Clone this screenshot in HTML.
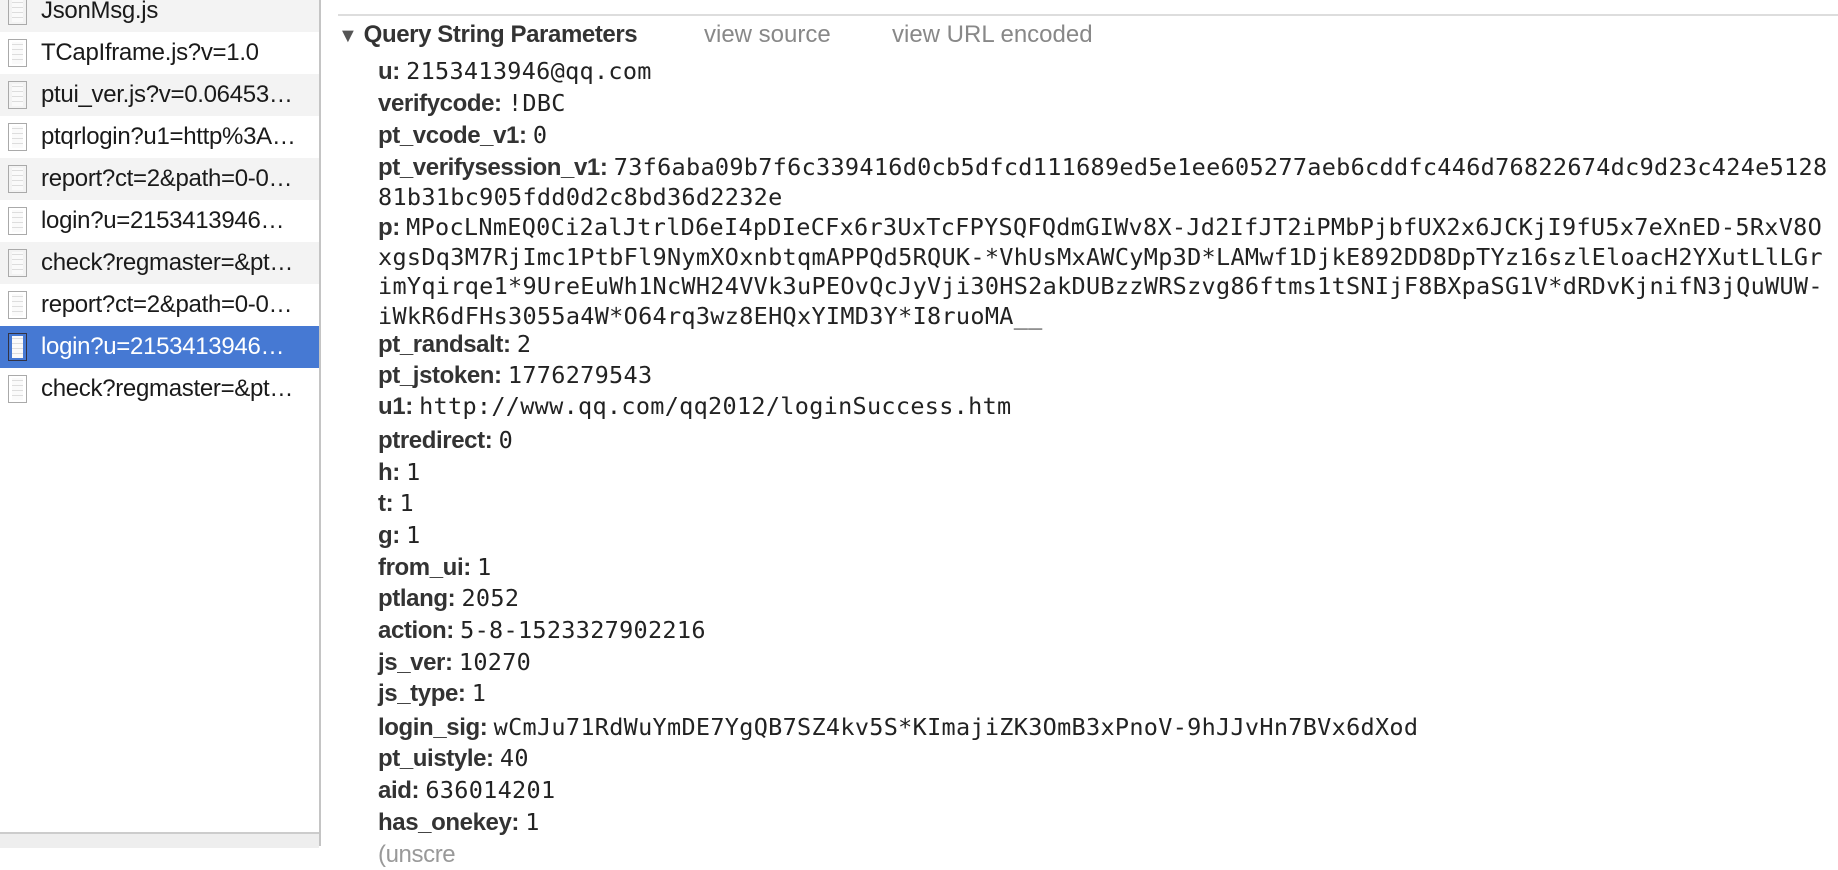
<!DOCTYPE html>
<html><head><meta charset="utf-8"><style>
body{margin:0;width:1838px;height:846px;overflow:hidden;background:#fff;font-family:"Liberation Sans",sans-serif;position:relative}
#side{position:absolute;left:0;top:0;width:319px;height:846px;border-right:2px solid #c4c4c4;background:#fff}
.r{position:absolute;left:0;width:319px;height:42px;font-size:24px;color:#1a1a1a;line-height:42px;white-space:nowrap;letter-spacing:-0.3px}
.r.g{background:#f3f3f3}
.r.s{background:#4679d3;color:#fff}
.r span{position:absolute;left:41px}
.ic{position:absolute;left:8px;top:7px;width:19px;height:28px;border:1.5px solid #aaa;background:#fafafa;
background-image:repeating-linear-gradient(#fafafa 0 4px,#ddd 4px 5px);background-clip:content-box;padding:2px 3px;box-sizing:border-box}
.s .ic{border-color:#334}
#bot{position:absolute;left:0;top:832px;width:319px;height:14px;background:#eee;border-top:2px solid #ccc}
#topline{position:absolute;left:338px;top:14px;right:0;height:2px;background:#ddd}
#hdr{position:absolute;left:338px;top:21px;font-size:24px;font-weight:bold;color:#333;white-space:nowrap;letter-spacing:-0.4px}
#hdr .v{font-weight:normal;color:#888;position:absolute;top:0;letter-spacing:0}
.p{position:absolute;left:378px;white-space:nowrap;font-size:24px;color:#333;line-height:30px;letter-spacing:-0.4px}
.p b{font-weight:bold}
.p i{font-style:normal;font-family:"DejaVu Sans Mono","Liberation Mono",monospace;font-size:23.5px;color:#222;letter-spacing:0.3px}
.w{line-height:29.5px}
</style></head><body>
<div id="side">
<div class="r g" style="top:-10px"><div class="ic"></div><span>JsonMsg.js</span></div>
<div class="r" style="top:32px"><div class="ic"></div><span>TCapIframe.js?v=1.0</span></div>
<div class="r g" style="top:74px"><div class="ic"></div><span>ptui_ver.js?v=0.06453…</span></div>
<div class="r" style="top:116px"><div class="ic"></div><span>ptqrlogin?u1=http%3A…</span></div>
<div class="r g" style="top:158px"><div class="ic"></div><span>report?ct=2&amp;path=0-0…</span></div>
<div class="r" style="top:200px"><div class="ic"></div><span>login?u=2153413946…</span></div>
<div class="r g" style="top:242px"><div class="ic"></div><span>check?regmaster=&amp;pt…</span></div>
<div class="r" style="top:284px"><div class="ic"></div><span>report?ct=2&amp;path=0-0…</span></div>
<div class="r s" style="top:326px"><div class="ic"></div><span>login?u=2153413946…</span></div>
<div class="r" style="top:368px"><div class="ic"></div><span>check?regmaster=&amp;pt…</span></div>
<div id="bot"></div>
</div>
<div id="topline"></div>
<div id="hdr"><span style="font-size:20px;color:#555">▼</span> Query String Parameters<span class="v" style="left:366px">view source</span><span class="v" style="left:554px">view URL encoded</span></div>

<div class="p" style="top:56px"><b>u:</b> <i>2153413946@qq.com</i></div>
<div class="p" style="top:88px"><b>verifycode:</b> <i>!DBC</i></div>
<div class="p" style="top:120px"><b>pt_vcode_v1:</b> <i>0</i></div>
<div class="p w" style="top:153px"><b>pt_verifysession_v1:</b> <i>73f6aba09b7f6c339416d0cb5dfcd111689ed5e1ee605277aeb6cddfc446d76822674dc9d23c424e5128</i><br><i>81b31bc905fdd0d2c8bd36d2232e</i></div>
<div class="p w" style="top:213px"><b>p:</b> <i>MPocLNmEQ0Ci2alJtrlD6eI4pDIeCFx6r3UxTcFPYSQFQdmGIWv8X-Jd2IfJT2iPMbPjbfUX2x6JCKjI9fU5x7eXnED-5RxV8O</i><br><i>xgsDq3M7RjImc1PtbFl9NymXOxnbtqmAPPQd5RQUK-*VhUsMxAWCyMp3D*LAMwf1DjkE892DD8DpTYz16szlEloacH2YXutLlLGr</i><br><i>imYqirqe1*9UreEuWh1NcWH24VVk3uPEOvQcJyVji30HS2akDUBzzWRSzvg86ftms1tSNIjF8BXpaSG1V*dRDvKjnifN3jQuWUW-</i><br><i>iWkR6dFHs3055a4W*O64rq3wz8EHQxYIMD3Y*I8ruoMA__</i></div>
<div class="p" style="top:329px"><b>pt_randsalt:</b> <i>2</i></div>
<div class="p" style="top:360px"><b>pt_jstoken:</b> <i>1776279543</i></div>
<div class="p" style="top:391px"><b>u1:</b> <i>http://www.qq.com/qq2012/loginSuccess.htm</i></div>
<div class="p" style="top:425px"><b>ptredirect:</b> <i>0</i></div>
<div class="p" style="top:457px"><b>h:</b> <i>1</i></div>
<div class="p" style="top:488px"><b>t:</b> <i>1</i></div>
<div class="p" style="top:520px"><b>g:</b> <i>1</i></div>
<div class="p" style="top:552px"><b>from_ui:</b> <i>1</i></div>
<div class="p" style="top:583px"><b>ptlang:</b> <i>2052</i></div>
<div class="p" style="top:615px"><b>action:</b> <i>5-8-1523327902216</i></div>
<div class="p" style="top:647px"><b>js_ver:</b> <i>10270</i></div>
<div class="p" style="top:678px"><b>js_type:</b> <i>1</i></div>
<div class="p" style="top:712px"><b>login_sig:</b> <i>wCmJu71RdWuYmDE7YgQB7SZ4kv5S*KImajiZK3OmB3xPnoV-9hJJvHn7BVx6dXod</i></div>
<div class="p" style="top:743px"><b>pt_uistyle:</b> <i>40</i></div>
<div class="p" style="top:775px"><b>aid:</b> <i>636014201</i></div>
<div class="p" style="top:807px"><b>has_onekey:</b> <i>1</i></div>
<div class="p" style="top:840px;color:#999">(unscre</div>
</body></html>
